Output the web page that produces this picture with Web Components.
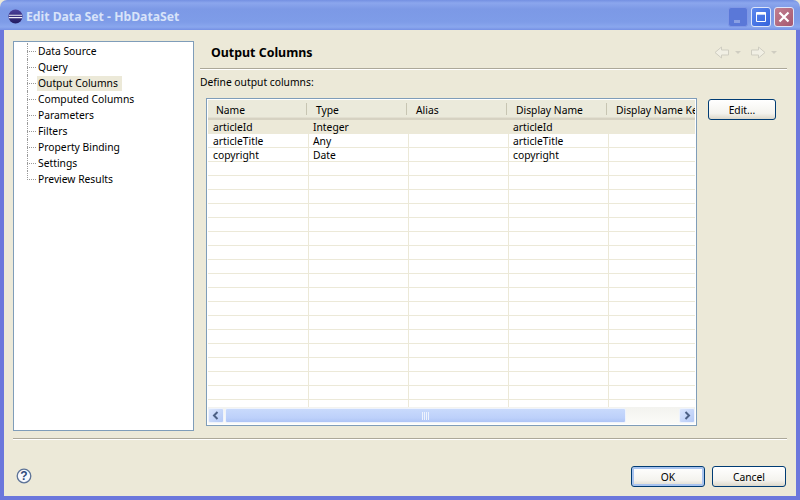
<!DOCTYPE html>
<html>
<head>
<meta charset="utf-8">
<title>Edit Data Set</title>
<style>
    html, body { margin: 0; padding: 0; background: #ece9d8; }
    body { width: 800px; height: 500px; overflow: hidden; font: 10.3px "Noto Sans", "DejaVu Sans", sans-serif; color: #000; }
</style>
</head>
<body>
<edit-dialog>
    <tree-item>Data Source</tree-item>
    <tree-item>Query</tree-item>
    <tree-item selected>Output Columns</tree-item>
    <tree-item>Computed Columns</tree-item>
    <tree-item>Parameters</tree-item>
    <tree-item>Filters</tree-item>
    <tree-item>Property Binding</tree-item>
    <tree-item>Settings</tree-item>
    <tree-item last>Preview Results</tree-item>
</edit-dialog>

<script>
function define_element(name, html, methods) {
    const template = document.createElement("template");
    template.innerHTML = html;
    customElements.define(name, class extends HTMLElement {
        constructor() {
            super();
            this.attachShadow({ mode: "open" });
            this.shadowRoot.append(template.content.cloneNode(true));
        }
        connectedCallback() {
            if (methods && methods.ready) methods.ready.call(this);
        }
    });
}

const UI_FONT = `font-family: "Noto Sans", "DejaVu Sans", sans-serif; font-size: 10.3px;`;

// 标题栏按钮
define_element("caption-button", /*html*/ `
<style>
    :host { display: block; width: 20px; height: 20px; box-sizing: border-box; border: 1px solid #dfe6fa; border-radius: 3px; }
    :host([kind="min"]) { background: #5a78d8; border-color: #7f97e6; }
    :host([kind="max"]) { background: linear-gradient(135deg, #5c88ee, #3563dc); }
    :host([kind="close"]) { background: linear-gradient(135deg, #c27f90, #a65870); }
    svg { display: block; width: 18px; height: 18px; }
</style>
<svg viewBox="0 0 18 18" fill="none"></svg>
`, {
    ready() {
        const icons = {
            min: `<path d="M5 13.5h6" stroke="#8aa0e4" stroke-width="3"/>`,
            max: `<path d="M4.5 4.5h9v9h-9z" stroke="#fff"/><path d="M4.5 5.5h9" stroke="#fff" stroke-width="2.4"/>`,
            close: `<path d="M4.5 4.5l9 9M13.5 4.5l-9 9" stroke="#fff" stroke-width="2.2"/>`
        };
        this.shadowRoot.querySelector("svg").innerHTML = icons[this.getAttribute("kind")];
    }
});

// 标题栏
define_element("title-bar", /*html*/ `
<style>
    :host {
        display: flex; align-items: center; height: 30px; flex: none; box-sizing: border-box;
        padding: 3px 6px 0 8px; border-radius: 7px 7px 0 0;
        background: linear-gradient(#7490e2 0, #8ba6ed 3px, #7c99e6 9px, #7e9ce8 22px, #8aa7ee 27px, #7590e4 30px);
    }
    .title { flex: 1; margin-left: 3px; color: #d8e3f9; font: bold 12.2px "Noto Sans", "DejaVu Sans", sans-serif; white-space: nowrap; }
    .buttons { display: flex; gap: 3px; }
    svg { display: block; }
</style>
<svg width="15" height="15" viewBox="0 0 15 15">
    <defs><linearGradient id="g" x1="0" y1="0" x2="0" y2="1"><stop offset="0" stop-color="#4b3f9a"/><stop offset="1" stop-color="#221c63"/></linearGradient></defs>
    <circle cx="7.5" cy="7.5" r="7" fill="url(#g)"/>
    <path d="M1 6.2h13M0.8 8.6h13.4" stroke="#f0eef8" stroke-width="1.1"/>
</svg>
<span class="title">Edit Data Set - HbDataSet</span>
<div class="buttons">
    <caption-button kind="min"></caption-button>
    <caption-button kind="max"></caption-button>
    <caption-button kind="close"></caption-button>
</div>
`);

// 树节点
define_element("tree-item", /*html*/ `
<style>
    :host { display: flex; height: 16px; align-items: center; position: relative; ${UI_FONT} line-height: 15px; }
    .lines { position: relative; width: 14px; height: 16px; flex: none; margin-left: 13px; }
    .v { position: absolute; left: 0; top: 0; bottom: 0; border-left: 1px dotted #9a9a9a; }
    .h { position: absolute; left: 0; width: 9px; top: 8px; border-top: 1px dotted #9a9a9a; }
    :host([last]) .v { bottom: 7px; }
    .text { margin-left: -4px; padding: 0 4px 0 1px; height: 15px; white-space: nowrap; }
    :host([selected]) .text { background: #ece9d8; }
</style>
<div class="lines"><div class="v"></div><div class="h"></div></div>
<span class="text"><slot></slot></span>
`);

// 左侧树
define_element("nav-tree", /*html*/ `
<style>
    :host { display: block; width: 181px; height: 390px; box-sizing: border-box; flex: none; padding-top: 1px; background: #fff; border: 1px solid #7f9db9; }
</style>
<slot></slot>
`);

// 按钮
define_element("xp-button", /*html*/ `
<style>
    :host {
        display: flex; align-items: center; justify-content: center; box-sizing: border-box;
        width: 74px; height: 21px; flex: none; border: 1px solid #003c74; border-radius: 3px;
        background: linear-gradient(#fff, #f4f3ee 70%, #dcd8ca);
        ${UI_FONT} color: #000;
    }
    :host([default]) { box-shadow: inset 0 0 0 2px #a9c4ef; }
</style>
<slot></slot>
`);

// 导航箭头
define_element("nav-arrows", /*html*/ `
<style>
    :host { display: flex; align-items: center; gap: 8px; }
    svg { display: block; }
</style>
<svg width="28" height="13" viewBox="0 0 28 13" fill="none">
    <path d="M7.5 1L1 6.5 7.5 12V9h7V4h-7z" fill="#f1efe4" stroke="#cfcdc1"/>
    <path d="M21 5h6l-3 3z" fill="#cfcdc1"/>
</svg>
<svg width="28" height="13" viewBox="0 0 28 13" fill="none">
    <path d="M8.5 1L15 6.5 8.5 12V9h-7V4h7z" fill="#f1efe4" stroke="#cfcdc1"/>
    <path d="M21 5h6l-3 3z" fill="#cfcdc1"/>
</svg>
`);

// 表格单元格
define_element("table-cell", /*html*/ `
<style>
    :host { display: block; width: 100px; flex: none; box-sizing: border-box; height: 100%; padding-left: 4px; border-right: 1px solid #ece9d8; white-space: nowrap; line-height: 14px; }
    :host(:first-child) { width: 101px; padding-left: 5px; }
</style>
<slot></slot>
`);

// 表格行
define_element("table-row", /*html*/ `
<style>
    :host { display: flex; height: 14px; box-sizing: border-box; border-bottom: 1px solid #ece9d8; ${UI_FONT} }
    :host([selected]) { background: #ece9d8; }
</style>
<slot></slot>
`);

// 表头单元格
define_element("head-cell", /*html*/ `
<style>
    :host { display: block; position: relative; width: 100px; flex: none; box-sizing: border-box; padding-left: 8px; white-space: nowrap; line-height: 20px; }
    :host(:not(:last-child))::after { content: ""; position: absolute; right: 1px; top: 3px; height: 12px; width: 0; border-right: 1px solid #c7c5b2; }
</style>
<slot></slot>
`);

// 滚动条
define_element("h-scrollbar", /*html*/ `
<style>
    :host { display: flex; height: 17px; flex: none; gap: 1px; background: linear-gradient(#f3f3ef, #fbfbf8); }
    .btn { width: 16px; height: 15px; margin: 1px 0; flex: none; box-sizing: border-box; border: 1px solid #eef3fd; border-radius: 2px; background: linear-gradient(135deg, #dbe6fd, #b4c9f6); display: flex; align-items: center; justify-content: center; }
    .thumb { width: 401px; flex: none; margin: 1px 0; box-sizing: border-box; border: 1px solid #eef3fd; border-radius: 2px; background: linear-gradient(#c9dafc, #bcd0fa 70%, #aec4f5); display: flex; align-items: center; justify-content: center; }
    .track { flex: 1; }
    svg { display: block; }
</style>
<div class="btn"><svg width="8" height="9" viewBox="0 0 8 9" fill="none"><path d="M5.5 1L2 4.5 5.5 8" stroke="#4d6185" stroke-width="2"/></svg></div>
<div class="thumb"><svg width="8" height="8" viewBox="0 0 8 8"><path d="M.5 0v8M2.5 0v8M4.5 0v8M6.5 0v8" stroke="#eef3fd"/></svg></div>
<div class="track"></div>
<div class="btn"><svg width="8" height="9" viewBox="0 0 8 9" fill="none"><path d="M2.5 1L6 4.5 2.5 8" stroke="#4d6185" stroke-width="2"/></svg></div>
`);

// 输出列表格
define_element("columns-table", /*html*/ `
<style>
    :host { display: flex; flex-direction: column; width: 491px; height: 328px; flex: none; box-sizing: border-box; padding: 1px; background: #fff; border: 1px solid #7f9db9; ${UI_FONT} }
    .head {
        display: flex; height: 20px; flex: none; overflow: hidden; box-sizing: border-box;
        background: #ebeadb; border-bottom: 2px solid #d6d2c2; box-shadow: inset 0 -1px 0 #e2dfd0;
    }
    .rows { flex: 1; min-height: 0; overflow: hidden; }
</style>
<div class="head">
    <head-cell>Name</head-cell><head-cell>Type</head-cell><head-cell>Alias</head-cell>
    <head-cell>Display Name</head-cell><head-cell>Display Name Key</head-cell>
</div>
<div class="rows"></div>
<h-scrollbar></h-scrollbar>
`, {
    ready() {
        const data = [
            ["articleId", "Integer", "", "articleId"],
            ["articleTitle", "Any", "", "articleTitle"],
            ["copyright", "Date", "", "copyright"]
        ];
        const rows = this.shadowRoot.querySelector(".rows");
        for (let i = 0; i < 21; i++) {
            const row = document.createElement("table-row");
            if (i == 0) row.setAttribute("selected", "");
            const values = data[i] || [];
            for (let c = 0; c < 5; c++) {
                const cell = document.createElement("table-cell");
                cell.textContent = values[c] || "";
                row.append(cell);
            }
            rows.append(row);
        }
    }
});

// 问号图标
define_element("help-icon", /*html*/ `
<style>
    :host { display: block; width: 16px; height: 16px; flex: none; }
    svg { display: block; }
    text { font: bold 12px "Liberation Sans", sans-serif; }
</style>
<svg width="16" height="16" viewBox="0 0 16 16">
    <circle cx="8" cy="8" r="6.8" fill="#f7f9fd" stroke="#5d7397" stroke-width="1.3"/>
    <text x="8" y="12.3" text-anchor="middle" fill="#2f4a7c">?</text>
</svg>
`);

// 分隔线
define_element("etched-line", /*html*/ `
<style>
    :host { display: block; height: 2px; flex: none; box-sizing: border-box; border-top: 1px solid #aca899; border-bottom: 1px solid #fff; }
</style>
`);

// 对话框
define_element("edit-dialog", /*html*/ `
<style>
    :host {
        display: flex; flex-direction: column; width: 800px; height: 500px; box-sizing: border-box;
        background: #ece9d8; ${UI_FONT}
    }
    .frame {
        flex: 1; display: flex; flex-direction: column; min-height: 0;
        border: solid #6b77dc; border-width: 0 4px 4px; padding: 11px 9px 0;
    }
    .main { display: flex; gap: 6px; height: 390px; flex: none; }
    .page { flex: 1; min-width: 0; display: flex; flex-direction: column; }
    .page-head { display: flex; align-items: center; justify-content: space-between; height: 22px; margin-bottom: 5px; padding: 0 9px 0 11px; flex: none; }
    .page-title { font-weight: bold; font-size: 12.4px; }
    .define { margin: 5px 0 0; height: 14px; line-height: 14px; }
    .content { display: flex; align-items: flex-start; gap: 11px; margin: 9px 0 0 6px; }
    .edit { margin-top: 1px; width: 68px; }
    .sep { margin-top: 7px; }
    .footer { display: flex; align-items: center; margin-top: 26px; padding-left: 3px; }
    .help { margin-top: -2px; }
    .actions { margin-left: auto; display: flex; gap: 7px; padding-right: 1px; }
</style>
<title-bar></title-bar>
<div class="frame">
    <div class="main">
        <nav-tree><slot></slot></nav-tree>
        <div class="page">
            <div class="page-head"><span class="page-title">Output Columns</span><nav-arrows></nav-arrows></div>
            <etched-line></etched-line>
            <div class="define">Define output columns:</div>
            <div class="content">
                <columns-table></columns-table>
                <xp-button class="edit">Edit...</xp-button>
            </div>
        </div>
    </div>
    <etched-line class="sep"></etched-line>
    <div class="footer">
        <help-icon class="help"></help-icon>
        <div class="actions">
            <xp-button default>OK</xp-button>
            <xp-button>Cancel</xp-button>
        </div>
    </div>
</div>
`);
</script>
</body>
</html>
